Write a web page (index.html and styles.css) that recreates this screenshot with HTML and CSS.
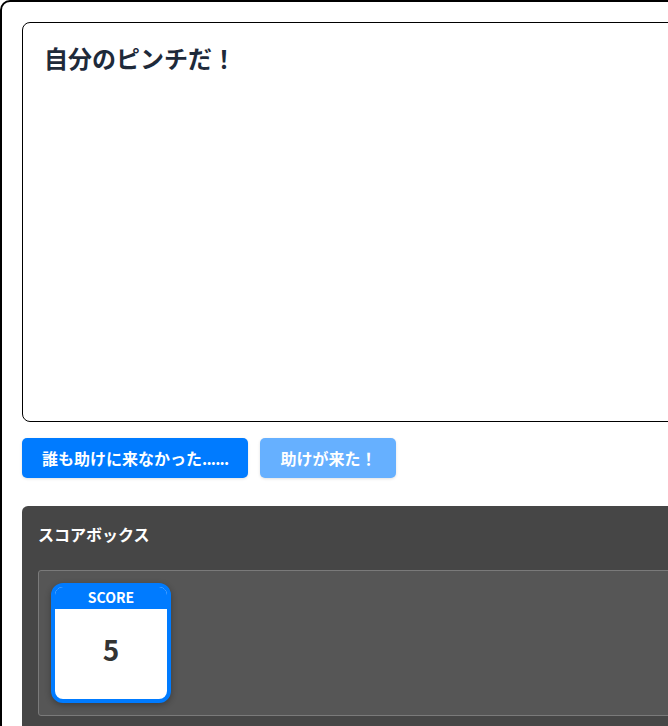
FILE: index.html
```html
<!DOCTYPE html>
<html lang="ja">
<head>
<meta charset="utf-8">
<title>ピンチ</title>
<link rel="stylesheet" href="styles.css">
</head>
<body>
<div class="frame">
  <div class="story">
    <h1 class="story-title">自分のピンチだ！</h1>
  </div>
  <div class="actions">
    <button class="btn btn-primary">誰も助けに来なかった<span class="dots">......</span></button>
    <button class="btn btn-primary btn-faded">助けが来た！</button>
  </div>
  <section class="scorebox">
    <h2 class="scorebox-title">スコアボックス</h2>
    <div class="scorebox-panel">
      <div class="score-card">
        <div class="score-head">SCORE</div>
        <div class="score-value">5</div>
      </div>
    </div>
  </section>
</div>
</body>
</html>
```

FILE: styles.css
```css
html, body {
  margin: 0;
  padding: 0;
  background: #ffffff;
}
body {
  font-family: "Noto Sans CJK JP", "Noto Sans", sans-serif;
  overflow: hidden;
}
.frame {
  width: 900px;
  border: 2px solid #000;
  border-radius: 10px;
  padding: 20px;
  box-sizing: border-box;
}
.story {
  height: 400px;
  box-sizing: border-box;
  border: 1px solid #000;
  border-radius: 8px;
  padding: 18px 21px;
}
.story-title {
  margin: 0;
  font-size: 24px;
  font-weight: 700;
  color: #1e2a3a;
  line-height: 1.4;
}
.actions {
  display: flex;
  gap: 12px;
  margin-top: 16px;
}
.btn {
  font-family: "Noto Sans CJK JP", "Noto Sans", sans-serif;
  font-size: 16px;
  font-weight: 700;
  height: 40px;
  padding: 0 20px;
  border: none;
  border-radius: 5px;
  color: #fff;
  cursor: pointer;
  box-shadow: 0 1px 3px rgba(0,0,0,0.12);
}
.dots {
  letter-spacing: -0.8px;
}
.btn-primary {
  background: #007bff;
}
.btn-faded {
  background: #66b0ff;
}
.scorebox {
  margin-top: 28px;
  background: #464646;
  border-radius: 6px;
  padding: 16px;
}
.scorebox-title {
  margin: 0 0 24px;
  font-size: 16px;
  font-weight: 700;
  color: #fff;
  line-height: 24px;
}
.scorebox-panel {
  background: #565656;
  border: 1px solid #7a7a7a;
  border-radius: 3px;
  padding: 12px;
  display: flex;
}
.score-card {
  width: 120px;
  height: 120px;
  box-sizing: border-box;
  border: 4px solid #007bff;
  border-radius: 12px;
  background: #fff;
  overflow: hidden;
  display: flex;
  flex-direction: column;
  box-shadow: 0 2px 6px rgba(0,0,0,0.3);
}
.score-head {
  background: #007bff;
  color: #fff;
  font-family: "Noto Sans CJK JP", "Noto Sans", sans-serif;
  font-weight: 700;
  font-size: 14px;
  text-align: center;
  height: 22px;
  line-height: 20px;
}
.score-value {
  flex: 1;
  display: flex;
  align-items: center;
  justify-content: center;
  padding-bottom: 10px;
  font-family: "Noto Sans CJK JP", "Noto Sans", sans-serif;
  font-weight: 700;
  font-size: 28px;
  color: #333;
}
```
